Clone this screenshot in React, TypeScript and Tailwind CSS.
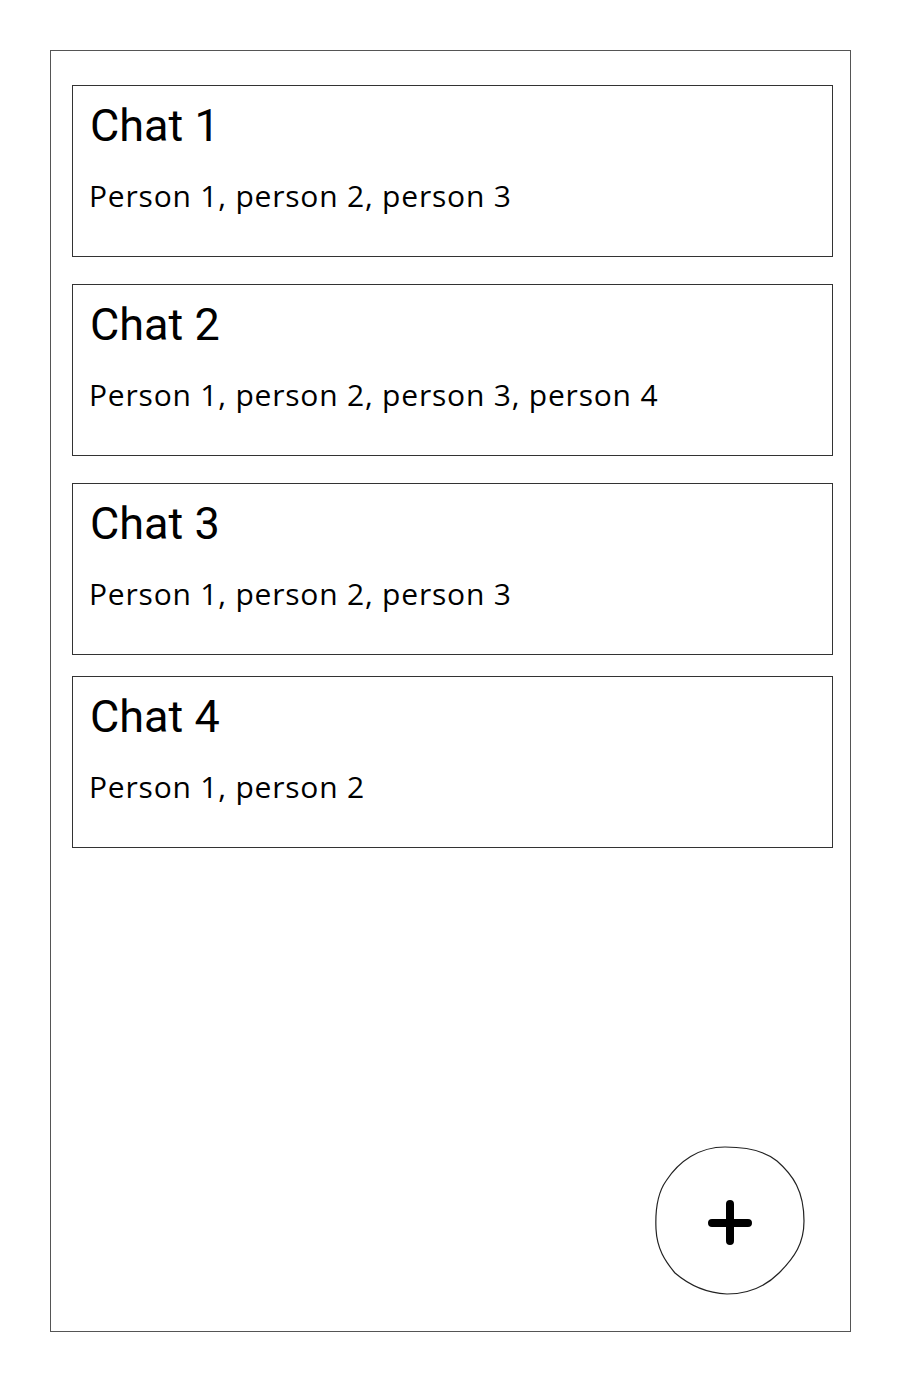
import React from "react";

const chats = [
  { title: "Chat 1", people: "Person 1, person 2, person 3", gap: "mt-0" },
  { title: "Chat 2", people: "Person 1, person 2, person 3, person 4", gap: "mt-[27px]" },
  { title: "Chat 3", people: "Person 1, person 2, person 3", gap: "mt-[27px]" },
  { title: "Chat 4", people: "Person 1, person 2", gap: "mt-[21px]" },
];

function AddButton() {
  return (
    <button className="relative w-[152px] h-[152px]">
      <svg width="152" height="152" viewBox="0 0 152 152" className="absolute inset-0">
        {/* sketchy circle */}
        <path
          d="M70 2 C92 2 110 6 122 16 C138 30 149 46 149 76 C149 98 140 112 124 128 C110 142 92 149 72 149 C50 148 34 140 20 128 C10 116 2 104 1 84 C0 62 4 46 11 36 C24 16 44 2 70 2 Z"
          fill="none"
          stroke="#222"
          strokeWidth="1.2"
        />
        <path d="M75 59 L75 96 M57 78 L93 78" stroke="#000" strokeWidth="8" strokeLinecap="round" />
      </svg>
    </button>
  );
}

export default function App() {
  return (
    <div className="w-[900px] h-[1382px] bg-white pt-[50px] pl-[50px]">
      <div className="w-[801px] h-[1282px] border border-[#555] flex flex-col pt-[34px] pl-[21px] pr-[17px] pb-[34px]">
        {chats.map((c) => (
          <div
            key={c.title}
            className={`${c.gap} h-[172px] border border-[#333] px-[16px] pt-[14px]`}
          >
            <h2 className="text-[45px] leading-[52px] text-black font-['Roboto',sans-serif] ml-[1px]">
              {c.title}
            </h2>
            <p className="mt-[24px] text-[30px] leading-[40px] text-black font-['Open_Sans',sans-serif] tracking-[0.8px]">
              {c.people}
            </p>
          </div>
        ))}
        <div className="flex-1" />
        <div className="flex justify-end pr-[26px]">
          <AddButton />
        </div>
      </div>
    </div>
  );
}
